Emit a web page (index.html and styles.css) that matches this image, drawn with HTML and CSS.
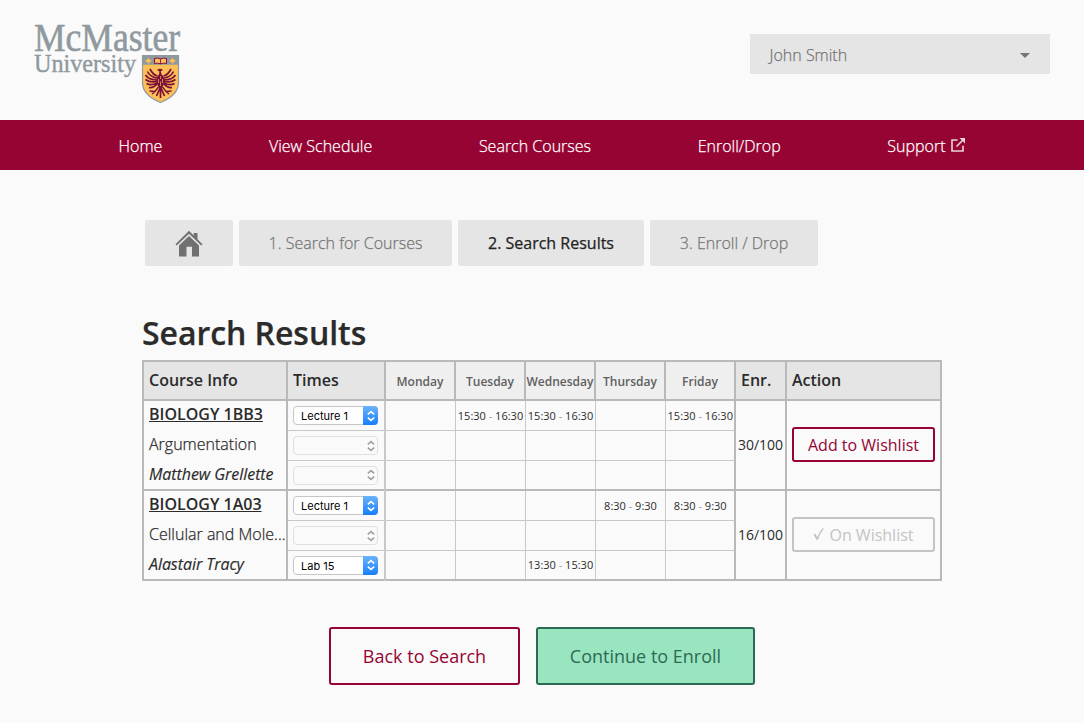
FILE: index.html
```html
<!DOCTYPE html>
<html lang="en">
<head>
<meta charset="utf-8">
<title>Search Results</title>
<link rel="stylesheet" href="styles.css">
</head>
<body>
<svg class="defs" aria-hidden="true">
  <symbol id="chevrons" viewBox="0 0 10 12"><path d="M1.8 4.4 5 1.6 8.2 4.4M1.8 7.6 5 10.4 8.2 7.6" fill="none" stroke="currentColor" stroke-width="1.5"/></symbol>
</svg>
<header class="header">
  <svg class="logo" width="160" height="94" viewBox="32 12 160 94" role="img" aria-label="McMaster University">
    <text class="logo-name" x="34" y="51" textLength="146" lengthAdjust="spacingAndGlyphs">McMaster</text>
    <text class="logo-sub" x="34" y="72" textLength="102" lengthAdjust="spacingAndGlyphs">University</text>
    <path d="M142.500 55.500h36v27c0 10-8 16-18 20-10-4-18-10-18-20z" fill="#fdbf57" stroke="#8f999e" stroke-width="1.200"/>
    <path d="M142.500 55.500h36v9.300h-36z" fill="#8f999e"/>
    <path d="m148.500 58.300 1 1.600 1.800.9-1.800 1-1 1.600-1-1.600-1.800-1 1.800-.9zM172.500 58.300l1 1.600 1.800.9-1.800 1-1 1.600-1-1.600-1.800-1 1.800-.9z" fill="#fdbf57" stroke="#fdbf57"/>
    <path d="M154.500 58.500q3-1 6 .5 3-1.500 6-.5v5q-3-.8-6 .3-3-1.100-6-.3z" fill="#fdbf57" stroke="#7a003c" stroke-width=".9"/>
    <path d="M160.500 59v5" stroke="#7a003c" stroke-width=".8"/>
    <g fill="none" stroke="#7a1038" stroke-width="1.700">
      <path d="M157.500 76Q153 75 150 69M157 78Q150 77 147.500 71.500M157 80Q149 80 145.500 75M157 81.500Q150 83 145.500 79.500M157 83Q151 86 146.500 83.500M157 84Q153 88.500 149 87.500"/>
      <path d="M163.500 76Q168 75 171 69M164 78Q171 77 173.500 71.500M164 80Q172 80 175.500 75M164 81.500Q171 83 175.500 79.500M164 83Q170 86 174.500 83.500M164 84Q168 88.500 172 87.500"/>
      <path d="M158.500 87 155 91.500 149.500 91M155 91.500 152 94M162.500 87 166 91.500 171.500 91M166 91.500 169 94" stroke-width="1.400"/>
      <path d="M160.500 87 156.500 96M160.500 87V98M160.500 87 164.500 96"/>
    </g>
    <path d="M157 70q2-2 5-1l.8 1.500-2 .6.700 3.400q3 2 3 6.500t-4 8q-4-3.500-4-8t2.500-6.500l.5-3z" fill="#7a1038"/>
    <path d="M160.500 76v3m0 2.500V86M158.500 79v4m4-4v4" fill="none" stroke="#fdbf57" stroke-width=".7"/>
  </svg>
  <div class="user"><span>John Smith</span><span class="caret"></span></div>
</header>
<nav class="nav">
  <a>Home</a><a>View Schedule</a><a>Search Courses</a><a>Enroll/Drop</a>
  <a class="ext">Support<svg width="14" height="14" viewBox="0 0 14 14"><path d="M6.500 2H1v11h11V7.800" fill="none" stroke="currentColor" stroke-width="1.600"/><path d="M5.500 8.500 11.500 2.500" stroke="currentColor" stroke-width="1.600"/><path d="M8.500 0H14v5.500z" fill="currentColor"/></svg></a>
</nav>
<main class="main">
  <div class="steps">
    <a class="step home"><svg width="28" height="28" viewBox="0 0 28 28"><path d="M14 .8 18.700 5.500V3H22.500v6.300L27.500 14.300 26.300 15.500 14 3.700 1.700 15.500.5 14.300z"/><path d="M14 6 24 15.600V26.500H17V16.800H11.500V26.500H4V15.600z"/></svg></a>
    <a class="step s1">1. Search for Courses</a>
    <a class="step s2 current">2. Search Results</a>
    <a class="step s3">3. Enroll / Drop</a>
  </div>
  <h1 class="title">Search Results</h1>
  <table class="results">
    <colgroup><col class="c-info"><col class="c-times"><col class="c-day"><col class="c-day"><col class="c-day"><col class="c-day"><col class="c-day"><col class="c-enr"><col class="c-act"></colgroup>
    <thead>
      <tr><th>Course Info</th><th>Times</th><th class="day">Monday</th><th class="day">Tuesday</th><th class="day">Wednesday</th><th class="day">Thursday</th><th class="day">Friday</th><th>Enr.</th><th>Action</th></tr>
    </thead>
    <tbody>
      <tr>
        <td class="info" rowspan="3"><div class="code">BIOLOGY 1BB3</div><div class="name">Argumentation</div><div class="prof">Matthew Grellette</div></td>
        <td class="time"><div class="select">Lecture 1<span class="knob"><svg><use href="#chevrons"/></svg></span></div></td>
        <td></td><td>15:30 <i>-</i> 16:30</td><td>15:30 <i>-</i> 16:30</td><td></td><td>15:30 <i>-</i> 16:30</td>
        <td class="enr" rowspan="3">30/100</td>
        <td class="act" rowspan="3"><div class="btn">Add to Wishlist</div></td>
      </tr>
      <tr><td class="time"><div class="select off"><span class="knob"><svg><use href="#chevrons"/></svg></span></div></td><td></td><td></td><td></td><td></td><td></td></tr>
      <tr><td class="time"><div class="select off"><span class="knob"><svg><use href="#chevrons"/></svg></span></div></td><td></td><td></td><td></td><td></td><td></td></tr>
    </tbody>
    <tbody>
      <tr>
        <td class="info" rowspan="3"><div class="code">BIOLOGY 1A03</div><div class="name">Cellular and Mole...</div><div class="prof">Alastair Tracy</div></td>
        <td class="time"><div class="select">Lecture 1<span class="knob"><svg><use href="#chevrons"/></svg></span></div></td>
        <td></td><td></td><td></td><td>8:30 <i>-</i> 9:30</td><td>8:30 <i>-</i> 9:30</td>
        <td class="enr" rowspan="3">16/100</td>
        <td class="act" rowspan="3"><div class="btn done"><svg width="11" height="14" viewBox="0 0 11 14"><path d="M.5 7.800 2.500 6.800 4.300 10.200Q6.300 4.500 9.500 1.200L11 1.300Q7 6.500 5 12.800H3.500Z" fill="currentColor"/></svg>On Wishlist</div></td>
      </tr>
      <tr><td class="time"><div class="select off"><span class="knob"><svg><use href="#chevrons"/></svg></span></div></td><td></td><td></td><td></td><td></td><td></td></tr>
      <tr><td class="time"><div class="select">Lab 15<span class="knob"><svg><use href="#chevrons"/></svg></span></div></td><td></td><td></td><td>13:30 <i>-</i> 15:30</td><td></td><td></td></tr>
    </tbody>
  </table>
  <div class="actions"><a class="big back">Back to Search</a><a class="big go">Continue to Enroll</a></div>
</main>
</body>
</html>
```
FILE: styles.css
```css
* { box-sizing: border-box; }
body { margin: 0; background: #fafafa; color: #2b2b2b; font: 300 16px/22px "Open Sans", sans-serif; height: 723px; overflow: hidden; }
.defs { position: absolute; width: 0; height: 0; }
.header { height: 120px; padding: 12px 34px 0 32px; display: flex; justify-content: space-between; align-items: flex-start; }
.logo text { font-family: "Liberation Serif", serif; fill: #8f999e; stroke: #8f999e; }
.logo .logo-name { font-size: 41px; stroke-width: .6px; }
.logo .logo-sub { font-size: 25px; stroke-width: .4px; }
.user { width: 300px; height: 40px; margin-top: 22px; padding: 0 20px 0 19.5px; background: #e5e5e5; color: #757575; display: flex; align-items: center; justify-content: space-between; }
.user span:first-child { padding-top: 2px; }
.caret { border: 5px solid transparent; border-top-color: #757575; border-bottom: 0; margin-top: 2px; }
.nav { height: 50px; background: #960433; color: #fff; padding: 2px 118.5px 0 118.5px; display: flex; justify-content: space-between; align-items: center; }
.nav, .user, .step, .name { -webkit-text-stroke: .25px currentColor; }
.ext { display: flex; align-items: center; gap: 6px; }
.ext svg { margin-top: -3px; color: #e8d6dc; }
.main { padding: 50px 142px 0; }
.steps { display: flex; gap: 6px; padding-left: 3px; }
.step { height: 46px; border-radius: 2px; background: #e5e5e5; color: #757575; display: flex; align-items: center; justify-content: center; white-space: nowrap; }
.home { width: 88px; }
.home svg { fill: #707070; margin-top: 1px; }
.s1 { width: 213px; }
.s2 { width: 186px; }
.s3 { width: 168px; }
.current { color: #222; font-weight: 400; }
.title { margin: 44px 0 0; height: 50px; font-size: 32px; line-height: 46px; font-weight: 600; letter-spacing: -.05px; -webkit-text-stroke: .25px currentColor; }
.results { width: 800px; table-layout: fixed; border-collapse: collapse; border: 2px solid #b9b9b9; }
.c-info { width: 144px; } .c-times { width: 98px; } .c-day { width: 70px; } .c-enr { width: 51px; } .c-act { width: 155px; }
.results th { height: 39px; padding: 0 5px 2px; background: #e5e5e5; border: 2px solid #b9b9b9; text-align: left; font-weight: 600; }
.results .day { background: #efefef; color: #606060; font-size: 12px; text-align: center; padding: 2px 0 0; }
.results td { height: 30px; padding: 1px 0 0 1px; border: 1px solid #c8c8c8; text-align: center; font-size: 11px; line-height: 14px; font-weight: 400; white-space: nowrap; }
.results td i { font-style: normal; color: #999; }
.results tbody { border: 2px solid #b9b9b9; }
.results .info, .results .enr, .results .act { border: 2px solid #b9b9b9; }
.results .time { border-right: 2px solid #c8c8c8; padding: 1px 5px 0; }
.results .info { padding: 0 0 0 5px; text-align: left; font-size: 16px; vertical-align: top; overflow: hidden; }
.info div { height: 30px; line-height: 26px; }
.info .prof { height: 26px; font-style: italic; font-weight: 400; letter-spacing: -.06px; -webkit-text-stroke: .15px currentColor; }
.code { font-weight: 600; text-decoration: underline; }
.name { font-weight: 300; }
.results .enr { font-size: 14px; font-weight: 400; padding: 0; }
.select { position: relative; height: 19px; width: 85px; border: 1px solid #c6c6c6; border-radius: 4px; background: #fff; color: #000; font: 400 11px/18px Inter, sans-serif; text-align: left; padding-left: 7px; }
.off { background: #fafafa; border-color: #e0e0e0; }
.knob { position: absolute; right: -1px; top: -1px; width: 15px; height: 19px; border-radius: 0 4px 4px 0; background: linear-gradient(#6cb3fa, #157efb); color: #fff; display: flex; align-items: center; justify-content: center; }
.knob svg { width: 10px; height: 12px; }
.off .knob { background: none; color: #a0a0a0; }
.results .act { padding: 0 5px 2px; }
.btn { height: 35px; border: 2px solid #960433; border-radius: 3px; color: #960433; font-size: 16px; line-height: 32px; display: flex; justify-content: center; }
.done { color: #c4c4c4; border-color: #c4c4c4; gap: 5px; }
.done svg { margin-top: 8px; }
.actions { display: flex; justify-content: center; gap: 16px; margin-top: 46px; }
.big { height: 58px; border: 2px solid #960433; border-radius: 3px; color: #960433; font-size: 18px; line-height: 54px; font-weight: 400; text-align: center; }
.back { width: 191px; }
.go { width: 219px; color: #2d6a55; border-color: #2d6a55; background: #99e5bf; }
```
